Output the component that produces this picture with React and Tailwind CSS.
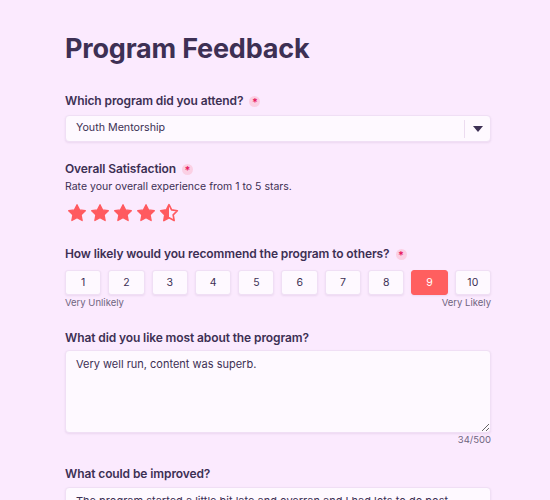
import React from "react";

const STAR = "M12 2l3.09 6.26L22 9.27l-5 4.87 1.18 6.88L12 17.77l-6.18 3.25L7 14.14 2 9.27l6.91-1.01L12 2z";

function Star({ half }) {
  return (
    <svg width="20" height="20" viewBox="0 0 24 24">
      <defs>
        <clipPath id="lefthalf">
          <rect x="0" y="0" width="12" height="24" />
        </clipPath>
      </defs>
      {half ? (
        <>
          <path d={STAR} fill="#ff5a5f" clipPath="url(#lefthalf)" />
          <path d={STAR} fill="none" stroke="#ff5a5f" strokeWidth="2" strokeLinejoin="round" />
        </>
      ) : (
        <path d={STAR} fill="#ff5a5f" stroke="#ff5a5f" strokeWidth="1.5" strokeLinejoin="round" />
      )}
    </svg>
  );
}

function Req() {
  return (
    <span className="ml-[6px] inline-flex h-[11px] w-[11px] items-center justify-center rounded-full bg-[#fbd0e4] text-[11px] font-semibold leading-none text-[#e8195e]">
      <span className="mt-[3px]">*</span>
    </span>
  );
}

function Label({ children, req }) {
  return (
    <div className="flex h-[20px] items-center text-[12px] font-semibold leading-[20px] tracking-[-0.1px] text-[#3d3054]">
      {children}
      {req && <Req />}
    </div>
  );
}

const fieldCls =
  "block h-[83px] w-full resize-y rounded-[4px] border border-[#f0dff5] bg-[#fef9ff] px-[10px] pt-[4px] font-[Inter,sans-serif] text-[11px] leading-[18px] text-[#3d3054] shadow-[0_1px_2px_rgba(120,80,140,0.12)] outline-none";

export default function App() {
  const nums = [1, 2, 3, 4, 5, 6, 7, 8, 9, 10];
  return (
    <div className="h-[500px] overflow-hidden bg-[#fbeafe] pl-[65px] pt-[31px] font-[Inter,'Noto_Sans',sans-serif]">
      <div className="w-[426px]">
        <h1 className="text-[27px] font-bold leading-[36px] tracking-[-0.2px] text-[#3d3054]">Program Feedback</h1>

        <div className="mt-[24px]">
          <Label req>Which program did you attend?</Label>
          <div className="mt-[4px] flex h-[27px] items-center rounded-[4px] border border-[#f0dff5] bg-[#fef9ff] shadow-[0_1px_2px_rgba(120,80,140,0.12)]">
            <div className="flex-1 pl-[10px] text-[10.7px] text-[#3d3054]">Youth Mentorship</div>
            <div className="h-[18px] w-px bg-[#ecdcf0]" />
            <div className="flex w-[25px] items-center justify-center">
              <svg width="10" height="6" viewBox="0 0 10 6">
                <path d="M0 0h10L5 6z" fill="#3d3054" />
              </svg>
            </div>
          </div>
        </div>

        <div className="mt-[17px]">
          <Label req>Overall Satisfaction</Label>
          <div className="text-[10.5px] leading-[16px] text-[#3d3054]">
            Rate your overall experience from 1 to 5 stars.
          </div>
          <div className="mt-[8px] flex gap-[3px] pl-[2px]">
            <Star />
            <Star />
            <Star />
            <Star />
            <Star half />
          </div>
        </div>

        <div className="mt-[21px]">
          <Label req>How likely would you recommend the program to others?</Label>
          <div className="mt-[6px] flex gap-[7px]">
            {nums.map((n) =>
              n === 9 ? (
                <div
                  key={n}
                  className="flex h-[25px] flex-1 items-center justify-center rounded-[3px] border border-[#ff5f5f] bg-[#ff5f5f] text-[10.5px] text-white shadow-[0_1px_2px_rgba(120,80,140,0.12)]"
                >
                  {n}
                </div>
              ) : (
                <div
                  key={n}
                  className="flex h-[25px] flex-1 items-center justify-center rounded-[3px] border border-[#f0dff5] bg-[#fef9ff] text-[10.5px] text-[#3d3054] shadow-[0_1px_2px_rgba(120,80,140,0.12)]"
                >
                  {n}
                </div>
              )
            )}
          </div>
          <div className="mt-[1px] flex justify-between text-[9.5px] leading-[14px] text-[#6f6580]">
            <span>Very Unlikely</span>
            <span>Very Likely</span>
          </div>
        </div>

        <div className="mt-[18px]">
          <Label>What did you like most about the program?</Label>
          <textarea readOnly defaultValue="Very well run, content was superb." className={"mt-[2px] " + fieldCls} />
          <div className="text-right text-[9.5px] leading-[14px] text-[#6f6580]">34/500</div>
        </div>

        <div className="mt-[17px]">
          <Label>What could be improved?</Label>
          <textarea
            readOnly
            defaultValue="The program started a little bit late and overran and I had lots to do post-event, so I couldn't stay for the final session."
            className={"mt-[3px] " + fieldCls}
          />
        </div>
      </div>
    </div>
  );
}
